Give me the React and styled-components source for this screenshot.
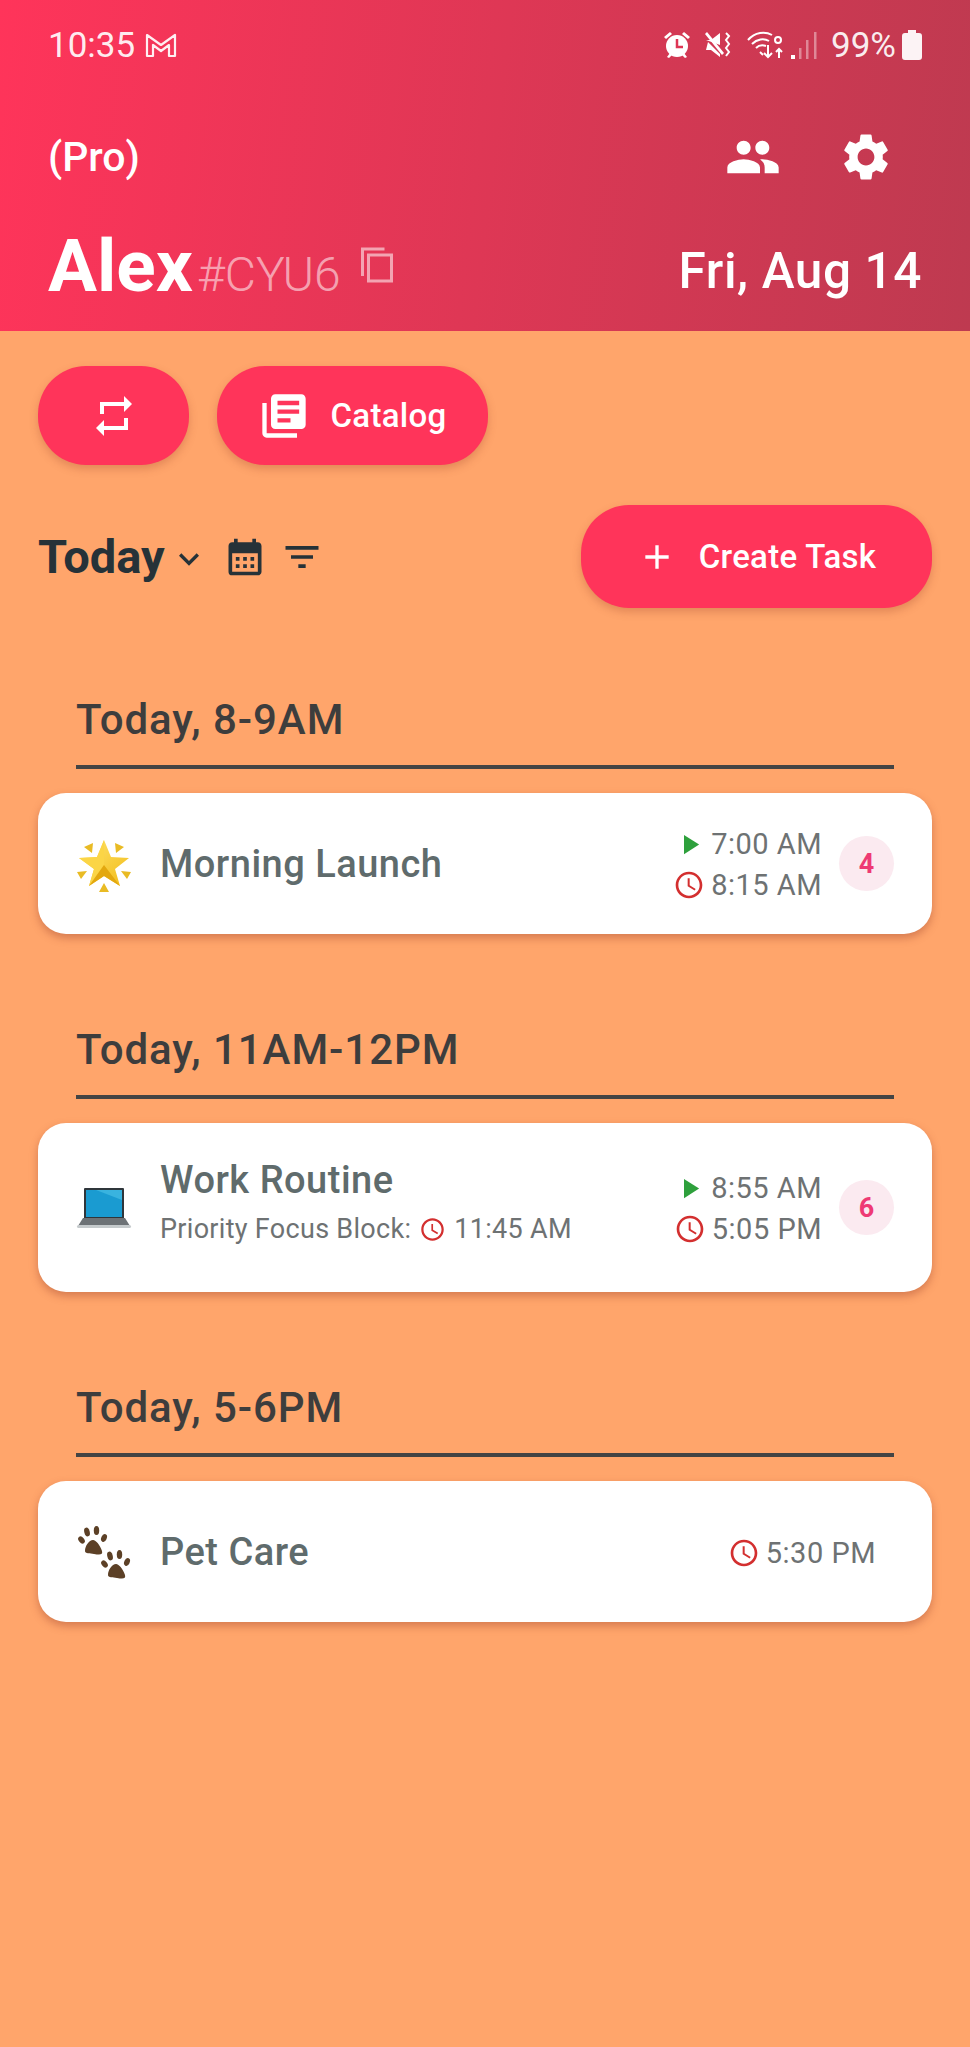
import React from 'react'
import styled, { createGlobalStyle } from 'styled-components'
import {
  MdPeople, MdSettings, MdRepeat, MdLibraryBooks, MdCalendarMonth, MdFilterList,
  MdAdd, MdAccessTime, MdPlayArrow, MdKeyboardArrowDown,
} from 'react-icons/md'

const GlobalStyle = createGlobalStyle`
  html, body { margin: 0; padding: 0; background: rgb(255, 165, 107); }
  * { box-sizing: border-box; }
`

const Page = styled.div`
  width: 970px;
  height: 2047px;
  overflow: hidden;
  background: rgb(255, 165, 107);
  font-family: Roboto, "Liberation Sans", sans-serif;
`

const Header = styled.header`
  height: 331px;
  padding: 24px 48px 0 48px;
  color: #fff;
  background: linear-gradient(97deg, rgb(255, 52, 90) 0%, rgb(190, 58, 80) 100%);
`

const StatusBar = styled.div`
  display: flex;
  align-items: center;
  justify-content: space-between;
  height: 42px;
  font-size: 35px;
  color: rgba(255, 255, 255, 0.92);
`

const StatusGroup = styled.div`
  display: flex;
  align-items: center;
  gap: ${p => p.$gap}px;
`

const NavRow = styled.div`
  display: flex;
  align-items: center;
  justify-content: space-between;
  height: 60px;
  margin-top: 61px;
`

const Plan = styled.span`
  font-size: 41px;
  font-weight: 500;
`

const NavIcons = styled.div`
  display: flex;
  align-items: center;
  gap: 57px;
  margin-right: 28px;
`

const NameRow = styled.div`
  display: flex;
  align-items: flex-end;
  justify-content: space-between;
  margin-top: 36px;
`

const NameGroup = styled.div`
  display: flex;
  align-items: baseline;
`

const Name = styled.span`
  font-size: 73px;
  font-weight: 700;
  line-height: 86px;
`

const Tag = styled.span`
  font-size: 48px;
  font-weight: 300;
  margin-left: 4px;
  color: rgba(255, 255, 255, 0.55);
`

const CopyIcon = styled.svg`
  width: 32px;
  height: 36px;
  margin-left: 20px;
  align-self: center;
  margin-bottom: 2px;
`

const DateText = styled.span`
  font-size: 49.500px;
  font-weight: 500;
  line-height: 58px;
  padding-bottom: 9px;
  letter-spacing: 0.6px;
`

const Toolbar = styled.section`
  padding: 35px 38px 0 38px;
`

const ButtonRow = styled.div`
  display: flex;
  gap: 28px;
`

const PillButton = styled.button`
  display: flex;
  align-items: center;
  justify-content: center;
  gap: ${p => p.$gap || 0}px;
  width: ${p => p.$w}px;
  height: ${p => p.$h}px;
  padding: 0;
  border: 0;
  border-radius: 48px;
  color: #fff;
  background: rgb(255, 52, 90);
  font-family: inherit;
  font-size: 33px;
  font-weight: 500;
  letter-spacing: 0.3px;
  box-shadow: 0 4px 9px rgba(150, 60, 40, 0.28);
`

const FilterRow = styled.div`
  display: flex;
  align-items: center;
  justify-content: space-between;
  margin-top: 40px;
`

const FilterGroup = styled.div`
  display: flex;
  align-items: center;
  color: rgb(38, 50, 56);
`

const FilterTitle = styled.span`
  font-size: 47px;
  font-weight: 700;
`

const Section = styled.section`
  padding: 0 38px;
  margin-top: ${p => p.$top}px;
`

const SectionHead = styled.h2`
  margin: 0 38px 24px 38px;
  padding-bottom: 20px;
  border-bottom: 4px solid rgb(68, 68, 68);
  font-size: 42px;
  font-weight: 500;
  line-height: 50px;
  letter-spacing: 0.95px;
  color: rgb(61, 61, 61);
`

const Card = styled.article`
  display: flex;
  align-items: center;
  height: ${p => p.$h}px;
  padding: 0 38px;
  border-radius: 28px;
  background: #fff;
  box-shadow: 0 4px 9px rgba(150, 60, 40, 0.4);
`

const Emoji = styled.svg`
  width: 56px;
  height: 56px;
  flex: none;
  margin-right: 28px;
`

const CardBody = styled.div`
  flex: 1;
  min-width: 0;
`

const CardTitle = styled.div`
  font-size: 38px;
  font-weight: 500;
  letter-spacing: 0.5px;
  color: rgb(95, 107, 108);
`

const CardNote = styled.div`
  display: flex;
  align-items: center;
  gap: 8px;
  margin-top: 11px;
  margin-bottom: 12px;
  font-size: 27px;
  letter-spacing: 0.3px;
  color: rgb(110, 114, 115);
`

const Times = styled.div`
  display: flex;
  flex-direction: column;
  align-items: flex-end;
  gap: 5px;
  padding-top: 2px;
  margin-right: ${p => p.$end}px;
`

const TimeRow = styled.div`
  display: flex;
  align-items: center;
  gap: ${p => p.$gap || 6}px;
  height: 36px;
  font-size: 29px;
  letter-spacing: 0.5px;
  color: rgb(110, 114, 115);
`

const Badge = styled.div`
  display: flex;
  align-items: center;
  justify-content: center;
  width: 55px;
  height: 55px;
  flex: none;
  border-radius: 50%;
  background: rgb(251, 234, 240);
  font-size: 27px;
  font-weight: 700;
  color: rgb(238, 58, 116);
`

const Red = 'rgb(211, 47, 47)'
const Green = 'rgb(46, 160, 60)'

const GmailIcon = () => (
  <svg width="32" height="26" viewBox="0 0 32 26" fill="none" stroke="rgba(255,255,255,.92)" strokeWidth="2.200">
    <path d="M2 3l14 10L30 3v21h-6V13l-8 6-8-6v11H2z" strokeLinejoin="round" />
  </svg>
)

const AlarmIcon = () => (
  <svg width="28" height="28" viewBox="0 0 28 28">
    <path d="M1 6l6-5 2 2-6 5zM27 6l-6-5-2 2 6 5z" fill="#fff" />
    <circle cx="14" cy="15" r="11" fill="#fff" />
    <path d="M4 26l3-4 2 2-3 3zM24 26l-3-4-2 2 3 3z" fill="#fff" />
    <path d="M14 8v8h6" fill="none" stroke="rgb(222,54,84)" strokeWidth="2.500" />
  </svg>
)

const MuteIcon = () => (
  <svg width="28" height="28" viewBox="0 0 28 28" fill="#fff">
    <path d="M1 9h5l9-7v12zM3 11l12 12v3l-9-7H1z" />
    <path d="M0 3l2-2 17 21-2 2z" />
    <path d="M21 2l3 3-3 4 3 4-3 4 3 4-3 4" fill="none" stroke="#fff" strokeWidth="2" />
  </svg>
)

const WifiIcon = () => (
  <svg width="36" height="28" viewBox="0 0 36 28" fill="none" stroke="#fff" strokeWidth="2">
    <path d="M1 9C8 1 18 0 25 4M5 13c5-5 12-6 17-3M9 17c3-3 7-3 10-2" />
    <path d="M13 21l3 3" />
    <path d="M21 14v12M17 22l4 4 4-4" />
    <path d="M32 27V18M29 21l3-3 3 3" />
    <circle cx="31" cy="9" r="3" />
  </svg>
)

const SignalIcon = () => (
  <svg width="26" height="28" viewBox="0 0 26 28">
    <rect x="0" y="24" width="4" height="4" fill="#fff" />
    <rect x="8" y="17" width="2.500" height="11" fill="rgba(255,255,255,.4)" />
    <rect x="15" y="9" width="2.500" height="19" fill="rgba(255,255,255,.4)" />
    <rect x="23" y="1" width="2.500" height="27" fill="rgba(255,255,255,.4)" />
  </svg>
)

const BatteryIcon = () => (
  <svg width="20" height="30" viewBox="0 0 20 30" fill="rgba(255,255,255,.94)">
    <path d="M6 0h8v3h3a3 3 0 0 1 3 3v21a3 3 0 0 1-3 3H3a3 3 0 0 1-3-3V6a3 3 0 0 1 3-3h3z" />
  </svg>
)

const StarEmoji = () => (
  <Emoji viewBox="0 0 56 56">
    <defs>
      <linearGradient id="gold" x1="0" y1="0" x2="1" y2="1">
        <stop offset="0" stopColor="#ffe56f" />
        <stop offset="1" stopColor="#f2bb17" />
      </linearGradient>
    </defs>
    <path d="M28 4l7 17 18 1-14 11 5 17-16-10-15 10 5-17L3 22l18-1z" fill="url(#gold)" />
    <path d="M28 4v25L13 50l5-17L3 22l18-1z" fill="#fbd546" />
    <path d="M28 29L44 50 28 40 13 50z" fill="#e3a80f" />
    <path d="M8 11l9-4-1 10zM48 11l-9-4 1 10zM1 36l10-1-6 8zM55 36l-10-1 6 8zM28 47l5 9H23z" fill="#e9bb24" />
  </Emoji>
)

const LaptopEmoji = () => (
  <Emoji viewBox="0 0 56 56">
    <rect x="8" y="8" width="40" height="33" rx="1" fill="#2f363b" />
    <rect x="10" y="10" width="36" height="27" fill="#1a9bd1" />
    <path d="M20 10h26v10z" fill="#39b3df" />
    <path d="M7 38h42l5 8H2z" fill="#6d7276" />
    <rect x="1" y="45" width="54" height="3" rx="1.500" fill="#c5cacc" />
  </Emoji>
)

const Paw = ({ x, y }) => (
  <g transform={`translate(${x} ${y})`} fill="#5c4026">
    <ellipse cx="3.500" cy="14" rx="2.700" ry="4" transform="rotate(-40 3.500 14)" />
    <ellipse cx="9" cy="6" rx="2.700" ry="4.500" transform="rotate(-15 9 6)" />
    <ellipse cx="18.500" cy="4.500" rx="2.700" ry="4.500" />
    <ellipse cx="26" cy="12" rx="2.700" ry="4" transform="rotate(25 26 12)" />
    <path d="M15 14c3 0 7 5 9 11 1 4-2 4-8 3-4-1-9 0-9-3 0-5 4-11 8-11z" />
  </g>
)

const PawsEmoji = () => (
  <Emoji viewBox="0 0 56 56">
    <Paw x={2} y={2} />
    <Paw x={25} y={26} />
  </Emoji>
)

const Play = () => <MdPlayArrow size={33} color={Green} />
const Clock = ({ size = 32 }) => <MdAccessTime size={size} color={Red} />

export default function App () {
  return (
    <Page>
      <GlobalStyle />
      <Header>
        <StatusBar>
          <StatusGroup $gap={10}>
            <span>10:35</span>
            <GmailIcon />
          </StatusGroup>
          <StatusGroup $gap={14}>
            <AlarmIcon />
            <MuteIcon />
            <StatusGroup $gap={8}>
              <WifiIcon />
              <SignalIcon />
            </StatusGroup>
            <StatusGroup $gap={6}>
              <span>99%</span>
              <BatteryIcon />
            </StatusGroup>
          </StatusGroup>
        </StatusBar>
        <NavRow>
          <Plan>(Pro)</Plan>
          <NavIcons>
            <MdPeople size={56} />
            <MdSettings size={56} />
          </NavIcons>
        </NavRow>
        <NameRow>
          <NameGroup>
            <Name>Alex</Name>
            <Tag>#CYU6</Tag>
            <CopyIcon viewBox="0 0 32 36" fill="none" stroke="rgba(255,255,255,.55)" strokeWidth="3">
              <path d="M1.500 29V2h22" />
              <rect x="7.500" y="8" width="23" height="26" />
            </CopyIcon>
          </NameGroup>
          <DateText>Fri, Aug 14</DateText>
        </NameRow>
      </Header>

      <Toolbar>
        <ButtonRow>
          <PillButton $w={151} $h={99}><MdRepeat size={48} /></PillButton>
          <PillButton $w={271} $h={99} $gap={20}><MdLibraryBooks size={52} />Catalog</PillButton>
        </ButtonRow>
        <FilterRow>
          <FilterGroup>
            <FilterTitle>Today</FilterTitle>
            <MdKeyboardArrowDown size={40} style={{ margin: '4px 14px 0 4px' }} />
            <MdCalendarMonth size={44} style={{ marginRight: 13 }} />
            <MdFilterList size={44} />
          </FilterGroup>
          <PillButton $w={351} $h={103} $gap={22}><MdAdd size={40} />Create Task</PillButton>
        </FilterRow>
      </Toolbar>

      <Section $top={87}>
        <SectionHead>Today, 8-9AM</SectionHead>
        <Card $h={141}>
          <StarEmoji />
          <CardBody><CardTitle>Morning Launch</CardTitle></CardBody>
          <Times $end={17}>
            <TimeRow $gap={5}><Play />7:00 AM</TimeRow>
            <TimeRow><Clock />8:15 AM</TimeRow>
          </Times>
          <Badge>4</Badge>
        </Card>
      </Section>

      <Section $top={91}>
        <SectionHead>Today, 11AM-12PM</SectionHead>
        <Card $h={169}>
          <LaptopEmoji />
          <CardBody>
            <CardTitle>Work Routine</CardTitle>
            <CardNote><span>Priority Focus Block:</span><Clock size={27} /><span>11:45 AM</span></CardNote>
          </CardBody>
          <Times $end={17}>
            <TimeRow $gap={5}><Play />8:55 AM</TimeRow>
            <TimeRow><Clock />5:05 PM</TimeRow>
          </Times>
          <Badge>6</Badge>
        </Card>
      </Section>

      <Section $top={91}>
        <SectionHead>Today, 5-6PM</SectionHead>
        <Card $h={141}>
          <PawsEmoji />
          <CardBody><CardTitle>Pet Care</CardTitle></CardBody>
          <Times $end={18}>
            <TimeRow><Clock />5:30 PM</TimeRow>
          </Times>
        </Card>
      </Section>
    </Page>
  )
}
